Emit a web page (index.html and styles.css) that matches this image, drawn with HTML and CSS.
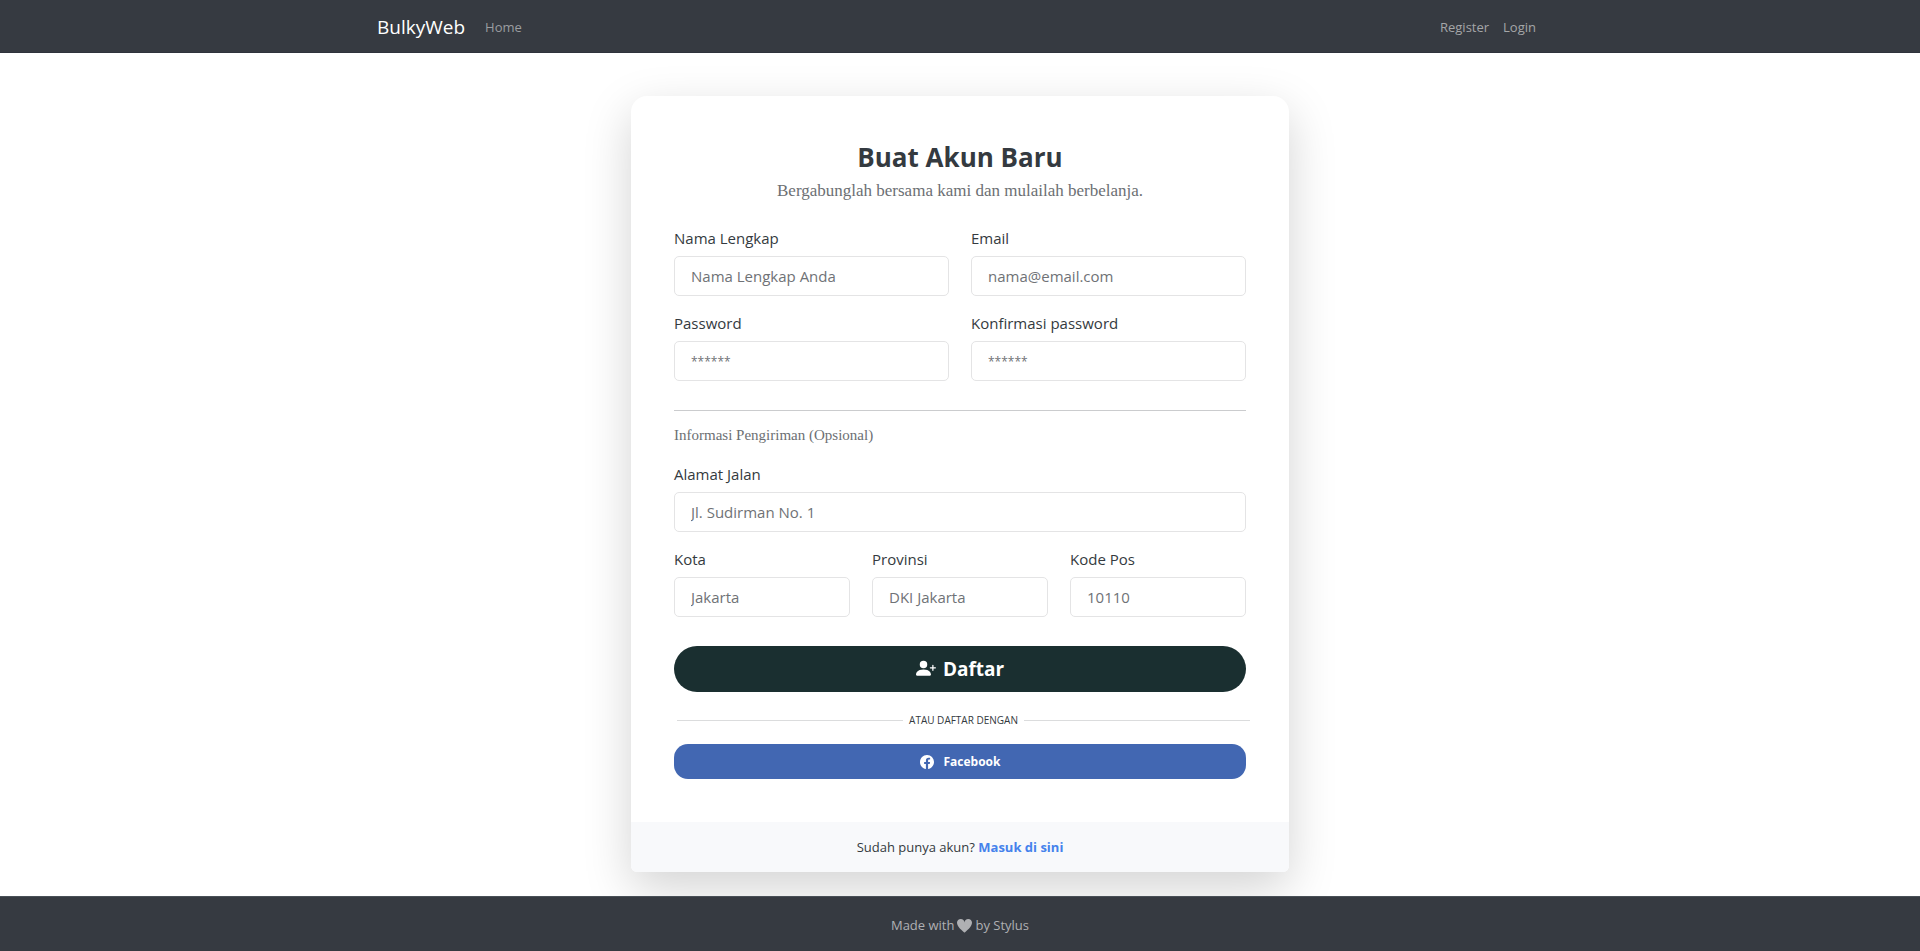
FILE: index.html
```html
<!DOCTYPE html>
<html lang="id">
<head>
<meta charset="utf-8">
<meta name="viewport" content="width=device-width, initial-scale=1">
<title>Register - BulkyWeb</title>
<link rel="stylesheet" href="styles.css">
</head>
<body>
<header class="navbar">
  <nav class="navbar-inner">
    <a class="brand" href="#">BulkyWeb</a>
    <a class="nav-link" href="#">Home</a>
    <div class="nav-end">
      <a class="nav-link" href="#">Register</a>
      <a class="nav-link" href="#">Login</a>
    </div>
  </nav>
</header>
<main class="main">
  <section class="card">
    <div class="card-body">
      <h2 class="title">Buat Akun Baru</h2>
      <p class="subtitle">Bergabunglah bersama kami dan mulailah berbelanja.</p>
      <form class="form">
        <div class="row">
          <div class="field"><label for="name">Nama Lengkap</label><input id="name" type="text" placeholder="Nama Lengkap Anda"></div>
          <div class="field"><label for="email">Email</label><input id="email" type="email" placeholder="nama@email.com"></div>
        </div>
        <div class="row">
          <div class="field"><label for="password">Password</label><input id="password" type="password" placeholder="******"></div>
          <div class="field"><label for="confirm">Konfirmasi password</label><input id="confirm" type="password" placeholder="******"></div>
        </div>
        <hr class="rule">
        <p class="section-note">Informasi Pengiriman (Opsional)</p>
        <div class="row">
          <div class="field"><label for="street">Alamat Jalan</label><input id="street" type="text" placeholder="Jl. Sudirman No. 1"></div>
        </div>
        <div class="row">
          <div class="field"><label for="city">Kota</label><input id="city" type="text" placeholder="Jakarta"></div>
          <div class="field"><label for="state">Provinsi</label><input id="state" type="text" placeholder="DKI Jakarta"></div>
          <div class="field"><label for="postal">Kode Pos</label><input id="postal" type="text" placeholder="10110"></div>
        </div>
        <button class="btn btn-submit" type="submit">
          <svg class="icon-person" viewBox="0 0 16 16" fill="currentColor" aria-hidden="true"><path d="M1 13.400s-1 0-1-1 1-4 6-4 6 3 6 4-1 1-1 1zm5-6a3 3 0 1 0 0-6 3 3 0 0 0 0 6"/><path fill-rule="evenodd" d="M13.500 4.500a.5.5 0 0 1 .5.5v1.500h1.500a.5.5 0 0 1 0 1H14V9a.5.5 0 0 1-1 0V7.500h-1.500a.5.5 0 0 1 0-1H13V5a.5.5 0 0 1 .5-.5"/></svg>
          Daftar
        </button>
      </form>
      <div class="divider"><span>ATAU DAFTAR DENGAN</span></div>
      <button class="btn btn-facebook" type="button">
        <svg class="icon-facebook" viewBox="0 0 16 16" fill="currentColor" aria-hidden="true"><path d="M16 8.049c0-4.446-3.582-8.050-8-8.050C3.580 0-.002 3.603-.002 8.050c0 4.017 2.926 7.347 6.750 7.951v-5.625h-2.030V8.050H6.750V6.275c0-2.017 1.195-3.131 3.022-3.131.876 0 1.791.157 1.791.157v1.980h-1.009c-.993 0-1.303.621-1.303 1.258v1.510h2.218l-.354 2.326H9.250V16c3.824-.604 6.750-3.934 6.750-7.951"/></svg>
        Facebook
      </button>
    </div>
    <div class="card-footer">Sudah punya akun? <a href="#">Masuk di sini</a></div>
  </section>
</main>
<footer class="footer">
  <span>Made with</span>
  <svg class="icon-heart" viewBox="0 0 16 16" fill="currentColor" role="img" aria-label="love"><path d="M4 1c2.210 0 4 1.755 4 3.920C8 2.755 9.790 1 12 1s4 1.755 4 3.920c0 3.800-3.400 6.900-7.400 10.300a.9.9 0 0 1-1.200 0C3.400 11.820 0 8.720 0 4.920 0 2.755 1.790 1 4 1"/></svg>
  <span>by Stylus</span>
</footer>
</body>
</html>
```
FILE: styles.css
```css
* { box-sizing: border-box; }
body {
  margin: 0;
  min-height: 100vh;
  display: flex;
  flex-direction: column;
  background: #fff;
  color: #343a40;
  font: 15px/24px "Open Sans", "Noto Sans", sans-serif;
}
a { text-decoration: none; }
.navbar {
  background: #363a41;
  border-bottom: 1px solid #2f333c;
}
.navbar-inner {
  max-width: 1190px;
  margin: 0 auto;
  padding: 11px 12px 9px;
  display: flex;
  align-items: center;
}
.brand {
  color: #fff;
  font-size: 19px;
  line-height: 32px;
  margin-right: 13px;
}
.nav-link {
  color: #9b9da0;
  font-size: 13px;
  padding: 4px 7px;
}
.nav-end {
  margin-left: auto;
  display: flex;
}
.nav-end .nav-link { color: #a5a6a8; }
.main {
  flex: 1;
  padding: 43px 16px 24px;
}
.card {
  max-width: 658px;
  margin: 0 auto;
  border-radius: 16px 16px 6px 6px;
  background: #fff;
  box-shadow: 0 16px 48px rgba(0, 0, 0, 0.176);
}
.card-body { padding: 43px; }
.title {
  margin: 0 0 4px;
  font-size: 26px;
  line-height: 36px;
  font-weight: 700;
  text-align: center;
}
.subtitle, .section-note {
  margin: 0;
  color: #6c6f73;
  font-family: "Liberation Serif", serif;
}
.subtitle {
  font-size: 17px;
  text-align: center;
}
.form { margin-top: 23px; }
.row {
  display: flex;
  gap: 22px;
}
.row + .row { margin-top: 15px; }
.field {
  flex: 1;
  min-width: 0;
  display: flex;
  flex-direction: column;
  gap: 6px;
}
.field input {
  width: 100%;
  height: 40px;
  padding: 0 16px;
  border: 1px solid #e4e4e5;
  border-radius: 5px;
  background: #fff;
  color: #343a40;
  font: inherit;
}
.field input::placeholder {
  color: #6f7276;
  opacity: 1;
}
.field input[type="password"] { font-size: 12px; }
.rule {
  width: 100%;
  height: 1px;
  margin: 29px 0 12px;
  border: 0;
  background: #cbccce;
}
.section-note {
  font-size: 15px;
  margin-bottom: 15px;
}
.btn {
  width: 100%;
  display: flex;
  align-items: center;
  justify-content: center;
  border: 0;
  color: #fff;
  font-family: inherit;
  cursor: pointer;
}
.btn-submit {
  height: 46px;
  margin-top: 29px;
  border-radius: 23px;
  background: #1a2f30;
  font-size: 19px;
  font-weight: 700;
  gap: 7px;
}
.icon-person { width: 20px; height: 20px; }
.divider {
  display: flex;
  align-items: center;
  gap: 6px;
  margin: 20px -4px 16px 3px;
  font-size: 10px;
  line-height: 16px;
}
.divider::before, .divider::after {
  content: "";
  flex: 1;
  height: 1px;
  background: #dbdcdd;
}
.btn-facebook {
  height: 35px;
  border-radius: 14px;
  background: #4267b2;
  font-size: 12px;
  font-weight: 700;
  gap: 10px;
}
.icon-facebook { width: 14px; height: 14px; }
.card-footer {
  padding: 13px 16px;
  border-radius: 0 0 6px 6px;
  background: #f8f9fb;
  font-size: 13px;
  text-align: center;
}
.card-footer a { color: #4582ec; font-weight: 700; }
.footer {
  display: flex;
  align-items: center;
  justify-content: center;
  gap: 3px;
  padding: 16px 16px 14px;
  border-top: 1px solid #495057;
  background: #363a41;
  color: #afb0b3;
  font-size: 13px;
}
.icon-heart { width: 15px; height: 15px; }
```
